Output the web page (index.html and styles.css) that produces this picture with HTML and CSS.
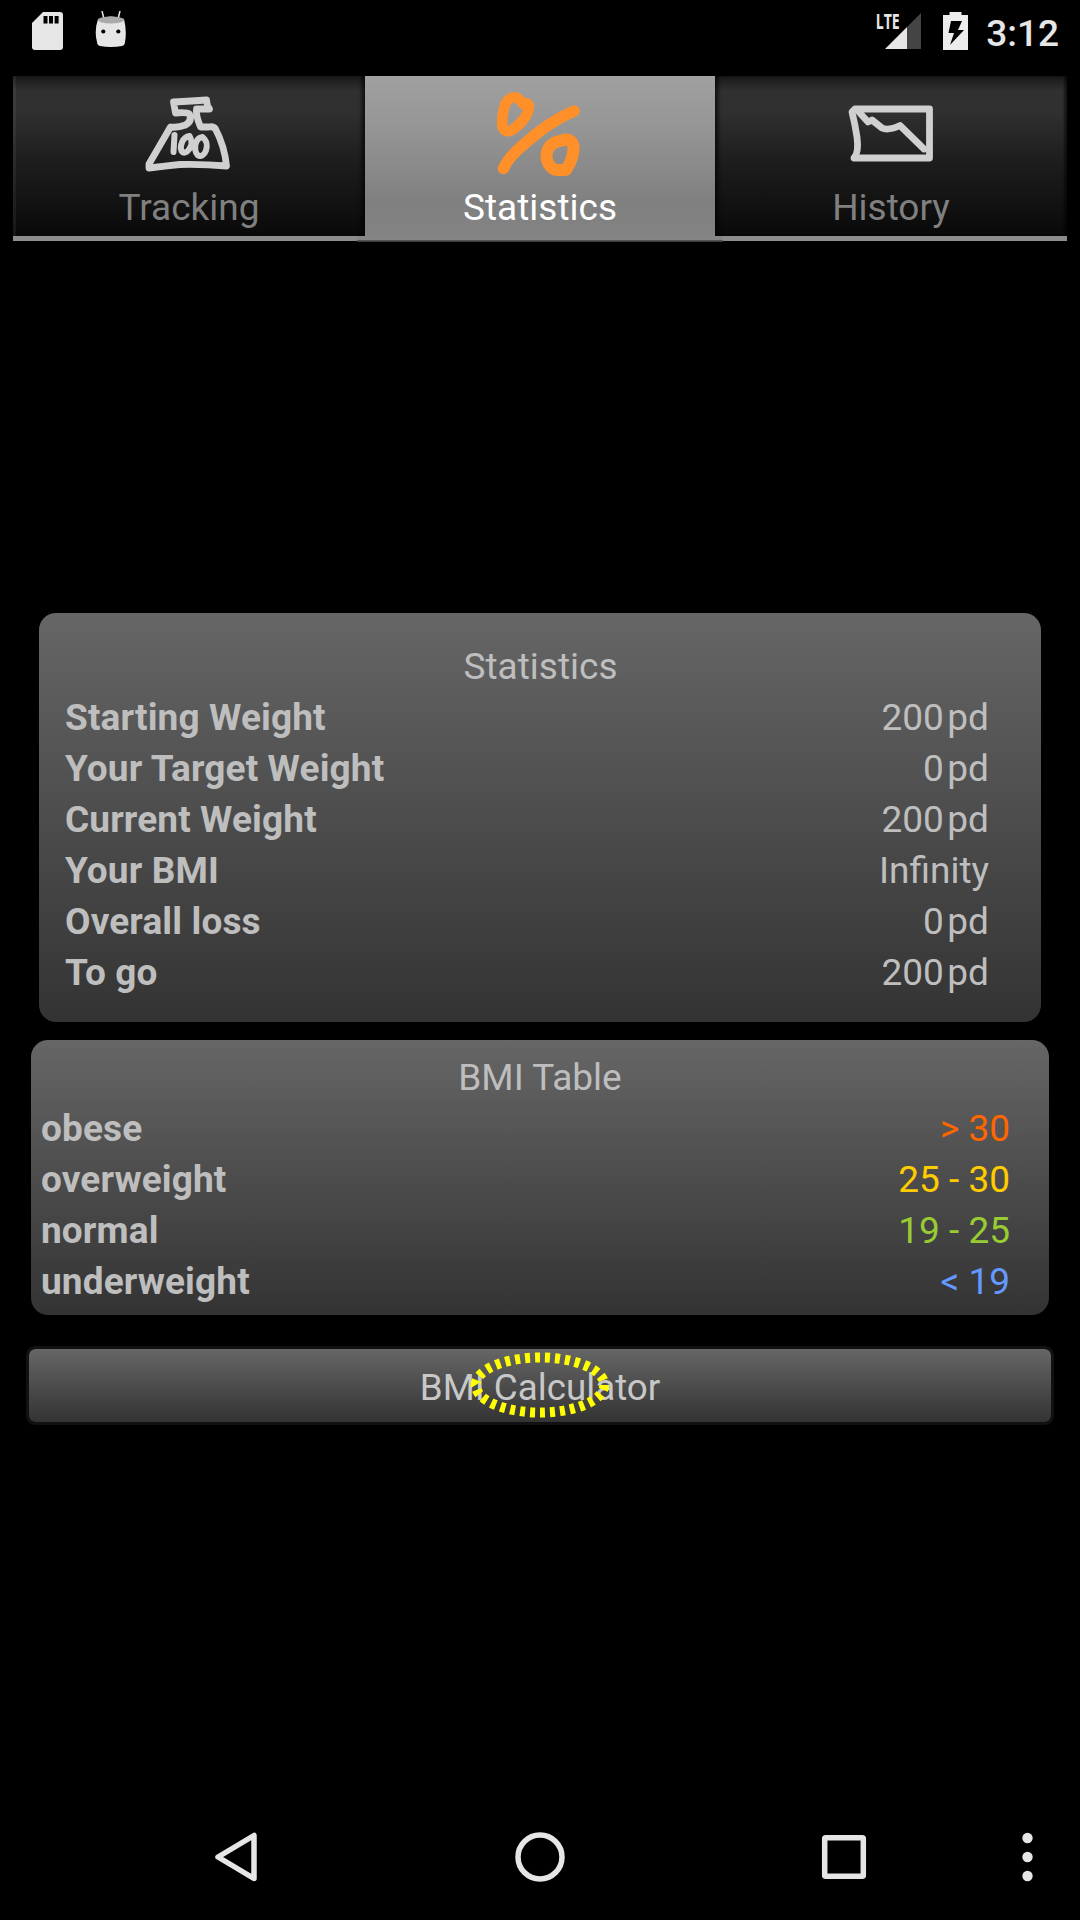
FILE: index.html
```html
<!DOCTYPE html>
<html lang="en">
<head>
<meta charset="utf-8">
<title>Statistics</title>
<link rel="stylesheet" href="styles.css">
</head>
<body>
<div class="screen">
  <header class="status">
    <svg class="status-icon" viewBox="0 0 31 38"><path fill="#e6e6e6" d="M11 0H28Q31 0 31 3V35Q31 38 28 38H3Q0 38 0 35V11Z"/><path d="M11.5 4h4v7.500h-4zM17 4h4v7.500h-4zM22.600 4h4v7.500h-4z"/></svg>
    <svg class="status-robot" viewBox="0 0 32 38"><path stroke="#e6e6e6" stroke-width="1.500" d="M7 0l2 8M25 0l-2 8"/><path fill="#e6e6e6" d="M3 8Q16 3 29 8Q32 20 30 31Q30 34 27 35Q16 37 5 35Q2 34 2 31Q-1 20 3 8Z"/><ellipse cx="16" cy="9" rx="13" ry="3.500" fill="#aaa"/><circle cx="8.300" cy="20.500" r="2.100"/><circle cx="23.300" cy="20.500" r="2.100"/></svg>
    <span class="spacer"></span>
    <svg class="signal" viewBox="0 0 46 38"><path fill="#444" d="M45 1V37H31V15Z"/><path fill="#e6e6e6" d="M31 15V37H9Z"/><text class="lte" x="-.3" y="17" textLength="24" lengthAdjust="spacingAndGlyphs">LTE</text></svg>
    <svg class="battery" viewBox="0 0 25 38"><path fill="#ececec" d="M0 3H6.500V0H18.500V3H25V38H0Z"/><path d="M8 9H19L15 18H21L7 33L11 21H5.500Z"/></svg>
    <time class="clock">3:12</time>
  </header>
  <nav class="tabs">
    <div class="tab first">
      <svg class="tab-icon" viewBox="147.500 90 84 84"><g fill="none" stroke="#d0d0d0" stroke-width="6.800" stroke-linejoin="round" stroke-linecap="round"><path d="M171 127L149.500 164V168Q166 166 180 164.500Q205 164 227 166Q225 146 216 129Q214 126 209 127H201Q196 115 197 109H210L208 106L207 100Q193 101 174 102L176 113Q187 112 190 114Q193 121 186 125Q178 128 171 127Z"/><path stroke-width="6" d="M175 135L174 152"/><path stroke-width="6" d="M190 136C183 137 180 146 182 151C186 157 196 145 190 136ZM203 137C195 138 194 150 198 155C205 160 212 144 203 137Z"/></g></svg>
      <span>Tracking</span>
    </div>
    <div class="tab active">
      <svg class="tab-icon" viewBox="498 90 84 84"><g fill="none" stroke="#ff9029" stroke-linejoin="round" stroke-linecap="round"><path stroke-width="10.500" d="M513 97.500Q506 99 504 108Q501.500 119 502.500 127Q505 133.500 512 130Q528 119 529 106Q528 102 523 104L519 99Q516 96.500 513 97.500Z"/><path stroke-width="11.500" d="M503.500 168.500Q508 158 522 146Q548 122 574 111"/><path stroke-width="12" d="M560 141Q552 142 548 149Q545 156 548 163Q552 170 558 170H566Q574 158 573.500 146Q572 139 565 139.500Z"/></g></svg>
      <span>Statistics</span>
    </div>
    <div class="tab last">
      <svg class="tab-icon" viewBox="849 90 84 84"><g fill="none" stroke="#d0d0d0" stroke-width="6.800" stroke-linejoin="round" stroke-linecap="round"><path d="M852 112L855 109H929.500V158H854Q859 153 857 137Q855 124 852 112Z"/><path d="M859 112L868 122L872 120L882 128Q888 131 900 125.500L924 149"/></g></svg>
      <span>History</span>
    </div>
  </nav>
  <main class="content">
    <section class="card stats">
      <h2>Statistics</h2>
      <dl>
        <div class="row"><dt>Starting Weight</dt><dd>200<i>pd</i></dd></div>
        <div class="row"><dt>Your Target Weight</dt><dd>0<i>pd</i></dd></div>
        <div class="row"><dt>Current Weight</dt><dd>200<i>pd</i></dd></div>
        <div class="row"><dt>Your BMI</dt><dd>Infinity</dd></div>
        <div class="row"><dt>Overall loss</dt><dd>0<i>pd</i></dd></div>
        <div class="row"><dt>To go</dt><dd>200<i>pd</i></dd></div>
      </dl>
    </section>
    <section class="card bmi">
      <h2>BMI Table</h2>
      <dl>
        <div class="row"><dt>obese</dt><dd class="obese">&gt; 30</dd></div>
        <div class="row"><dt>overweight</dt><dd class="overweight">25 - 30</dd></div>
        <div class="row"><dt>normal</dt><dd class="normal">19 - 25</dd></div>
        <div class="row"><dt>underweight</dt><dd class="underweight">&lt; 19</dd></div>
      </dl>
    </section>
    <button class="calc">BMI Calculator
      <svg class="marker" viewBox="0 0 140 66"><ellipse cx="70" cy="33" rx="64.300" ry="27.500" fill="none" stroke="#ff0" stroke-width="10" pathLength="300" stroke-dasharray="5 5"/></svg>
    </button>
  </main>
  <footer class="navbar">
    <svg viewBox="0 0 1080 120"><g fill="none" stroke="#e6e6e6" stroke-linejoin="round"><path stroke-width="5.500" d="M254 35.500V78.500L218 57Z"/><circle cx="540" cy="57" r="22" stroke-width="5.500"/><rect x="824.700" y="37.700" width="38.600" height="38.600" rx="1" stroke-width="5.500"/></g><g fill="#e6e6e6"><circle cx="1027.500" cy="38" r="5.200"/><circle cx="1027.500" cy="57" r="5.200"/><circle cx="1027.500" cy="76" r="5.200"/></g></svg>
  </footer>
</div>
</body>
</html>
```
FILE: styles.css
```css
* { box-sizing: border-box; }
body { margin: 0; background: #000; }
.screen {
  width: 1080px; height: 1920px; display: flex; flex-direction: column;
  overflow: hidden; background: #000; color: #bebebe;
  font: 37px/51px Roboto, sans-serif;
}
svg { display: block; flex: none; }
.status { height: 76px; padding: 12px 21px 0 32px; display: flex; align-items: flex-start; }
.status-icon { width: 31px; height: 38px; }
.status-robot { width: 32px; height: 38px; margin: -1px 0 0 32px; }
.spacer { flex: 1; }
.signal { width: 46px; height: 38px; overflow: visible; }
.lte { font: 700 21.500px "Open Sans", sans-serif; fill: #e6e6e6; }
.battery { width: 25px; height: 38px; margin: 0 18px 0 21px; }
.clock { margin-top: -4px; font-weight: 500; color: #e6e6e6; }
.tabs { height: 166px; margin: 0 13px; display: flex; }
.tab {
  flex: 0 0 352px; height: 165px; padding-top: 14px;
  display: flex; flex-direction: column; align-items: center;
  color: #808080; border-bottom: 5px solid #8c8c8c;
  background: linear-gradient(#181818, #303030 9%, #303030 22%, #1e1e1e 52%, #090909);
}
/* Soft dark edges where a tab meets its neighbour or the screen margin */
.tab.first { box-shadow: inset 3px 0 1px rgba(255,255,255,.06), inset -5px 0 4px -2px rgba(0,0,0,.7); }
.tab.last { box-shadow: inset 5px 0 4px -2px rgba(0,0,0,.7), inset -3px 0 2px rgba(0,0,0,.5); }
.tab.active {
  position: relative; flex-basis: 350px; height: 166px; color: #fff; border: 0;
  background: linear-gradient(#a0a0a0, #969696 30%, #808080 75%, #838383);
}
/* The selected tab's underline runs past both of its sides */
.tab.active::after {
  content: ""; position: absolute; left: -8px; right: -8px; bottom: 0; height: 6px;
  background: linear-gradient(#858585 4px, #606060 4px, #303030);
}
.tab-icon { width: 84px; height: 84px; margin-bottom: 8px; overflow: visible; }
.content { flex: 1; padding-top: 371px; }
.card { background: linear-gradient(#666, #333); border-radius: 17px; }
h2 { margin: 0; font: inherit; text-align: center; }
dl, dd { margin: 0; }
.row { display: flex; justify-content: space-between; height: 51px; }
dt { font-weight: 700; letter-spacing: .12px; }
i { font-style: normal; margin-left: 3.5px; }
.stats { margin: 0 39px 18px; padding: 28px 52px 24px 26px; }
.stats h2 { margin-right: -27px; }
.bmi { margin: 0 31px 31px; padding: 12px 39px 8px 10px; }
.bmi h2 { margin-right: -29px; }
.obese { color: #f60; }
.overweight { color: #fc0; }
.normal { color: #9c3; }
.underweight { color: #69f; }
.calc {
  position: relative; display: block; width: 1028px; height: 79px; margin: 0 26px; padding: 3px 0 0;
  border: 3px solid #111; border-radius: 9px; color: #c8c8c8; font: inherit; font-size: 36.75px;
  background: linear-gradient(#666, #333) padding-box;
}
.marker { position: absolute; left: 441px; top: 3px; width: 140px; height: 66px; }
.navbar { height: 120px; }
```
